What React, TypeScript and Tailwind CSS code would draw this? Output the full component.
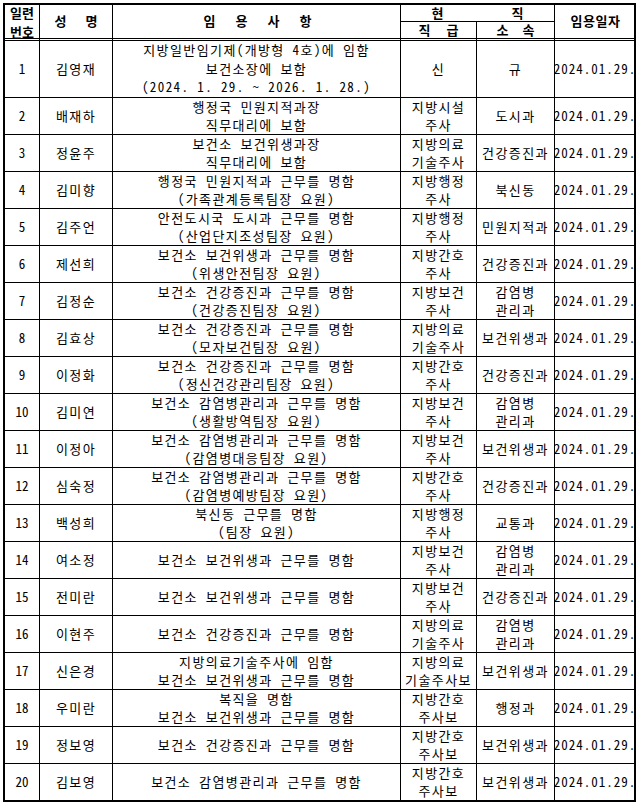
import React from "react";

type Row = {
  no: string;
  name: string;
  desc: string[];
  grade: string[];
  dept: string[];
};

const rows: Row[] = [
  { no: "1", name: "김영재", desc: ["지방일반임기제(개방형 4호)에 임함", "보건소장에 보함", "(2024. 1. 29. ~ 2026. 1. 28.)"], grade: ["신"], dept: ["규"] },
  { no: "2", name: "배재하", desc: ["행정국 민원지적과장", "직무대리에 보함"], grade: ["지방시설", "주사"], dept: ["도시과"] },
  { no: "3", name: "정윤주", desc: ["보건소 보건위생과장", "직무대리에 보함"], grade: ["지방의료", "기술주사"], dept: ["건강증진과"] },
  { no: "4", name: "김미향", desc: ["행정국 민원지적과 근무를 명함", "(가족관계등록팀장 요원)"], grade: ["지방행정", "주사"], dept: ["북신동"] },
  { no: "5", name: "김주언", desc: ["안전도시국 도시과 근무를 명함", "(산업단지조성팀장 요원)"], grade: ["지방행정", "주사"], dept: ["민원지적과"] },
  { no: "6", name: "제선희", desc: ["보건소 보건위생과 근무를 명함", "(위생안전팀장 요원)"], grade: ["지방간호", "주사"], dept: ["건강증진과"] },
  { no: "7", name: "김정순", desc: ["보건소 건강증진과 근무를 명함", "(건강증진팀장 요원)"], grade: ["지방보건", "주사"], dept: ["감염병", "관리과"] },
  { no: "8", name: "김효상", desc: ["보건소 건강증진과 근무를 명함", "(모자보건팀장 요원)"], grade: ["지방의료", "기술주사"], dept: ["보건위생과"] },
  { no: "9", name: "이정화", desc: ["보건소 건강증진과 근무를 명함", "(정신건강관리팀장 요원)"], grade: ["지방간호", "주사"], dept: ["건강증진과"] },
  { no: "10", name: "김미연", desc: ["보건소 감염병관리과 근무를 명함", "(생활방역팀장 요원)"], grade: ["지방보건", "주사"], dept: ["감염병", "관리과"] },
  { no: "11", name: "이정아", desc: ["보건소 감염병관리과 근무를 명함", "(감염병대응팀장 요원)"], grade: ["지방보건", "주사"], dept: ["보건위생과"] },
  { no: "12", name: "심숙정", desc: ["보건소 감염병관리과 근무를 명함", "(감염병예방팀장 요원)"], grade: ["지방간호", "주사"], dept: ["건강증진과"] },
  { no: "13", name: "백성희", desc: ["북신동 근무를 명함", "(팀장 요원)"], grade: ["지방행정", "주사"], dept: ["교통과"] },
  { no: "14", name: "여소정", desc: ["보건소 보건위생과 근무를 명함"], grade: ["지방보건", "주사"], dept: ["감염병", "관리과"] },
  { no: "15", name: "전미란", desc: ["보건소 보건위생과 근무를 명함"], grade: ["지방보건", "주사"], dept: ["건강증진과"] },
  { no: "16", name: "이현주", desc: ["보건소 건강증진과 근무를 명함"], grade: ["지방의료", "기술주사"], dept: ["감염병", "관리과"] },
  { no: "17", name: "신은경", desc: ["지방의료기술주사에 임함", "보건소 보건위생과 근무를 명함"], grade: ["지방의료", "기술주사보"], dept: ["보건위생과"] },
  { no: "18", name: "우미란", desc: ["복직을 명함", "보건소 보건위생과 근무를 명함"], grade: ["지방간호", "주사보"], dept: ["행정과"] },
  { no: "19", name: "정보영", desc: ["보건소 건강증진과 근무를 명함"], grade: ["지방간호", "주사보"], dept: ["보건위생과"] },
  { no: "20", name: "김보영", desc: ["보건소 감염병관리과 근무를 명함"], grade: ["지방간호", "주사보"], dept: ["보건위생과"] },
];

function Lines({ lines }: { lines: string[] }) {
  return (
    <div className="flex flex-col items-center">
      {lines.map((l, i) => (
        <span key={i} className="whitespace-pre">
          {l}
        </span>
      ))}
    </div>
  );
}

const cell = "flex items-center justify-center text-center border-black overflow-visible";

export default function App() {
  return (
    <div className="w-[640px] h-[806px] bg-white pt-[3px] pl-[3px]">
      <div
        className="w-[633px] border-2 border-black grid grid-cols-[35px_73px_288px_76px_78px_79px] grid-rows-[17px_19px_57px_repeat(18,37px)_36px] text-[13px] leading-[18.5px] tracking-[1.4px] text-black"
        style={{ fontFamily: '"Noto Sans Mono CJK KR", "Noto Sans CJK KR", sans-serif' }}
      >
        {/* header */}
        <div className={`${cell} row-span-2 border-r border-b-[3px] border-double font-bold leading-[19px]`}>
          <div className="flex flex-col items-center tracking-normal">
            <span>일련</span>
            <span>번호</span>
          </div>
        </div>
        <div className={`${cell} row-span-2 border-r border-b-[3px] border-double font-bold gap-[19px] tracking-normal`}>
          <span>성</span>
          <span>명</span>
        </div>
        <div className={`${cell} row-span-2 border-r border-b-[3px] border-double font-bold gap-[20px] pl-[2px] tracking-normal`}>
          <span>임</span>
          <span>용</span>
          <span>사</span>
          <span>항</span>
        </div>
        <div className={`${cell} col-span-2 border-r border-b font-bold gap-[68px] leading-[16px] tracking-normal`}>
          <span>현</span>
          <span>직</span>
        </div>
        <div className={`${cell} row-span-2 border-b-[3px] border-double font-bold pl-[2px] tracking-[0.5px]`}>
          <span>임용일자</span>
        </div>
        <div className={`${cell} border-r border-b-[3px] border-double font-bold gap-[16px] leading-[16px] tracking-normal`}>
          <span>직</span>
          <span>급</span>
        </div>
        <div className={`${cell} border-r border-b-[3px] border-double font-bold gap-[14px] leading-[16px] tracking-normal`}>
          <span>소</span>
          <span>속</span>
        </div>

        {/* body */}
        {rows.map((r, idx) => {
          const last = idx === rows.length - 1;
          const b = last ? "" : "border-b";
          return (
            <React.Fragment key={r.no}>
              <div className={`${cell} border-r ${b} tracking-normal`}>{r.no}</div>
              <div className={`${cell} border-r ${b}`}>{r.name}</div>
              <div className={`${cell} border-r ${b}`}>
                <Lines lines={r.desc} />
              </div>
              <div className={`${cell} border-r ${b}`}>
                <Lines lines={r.grade} />
              </div>
              <div className={`${cell} border-r ${b}`}>
                <Lines lines={r.dept} />
              </div>
              <div className={`${cell} ${b} whitespace-nowrap tracking-[1px] pl-[1px]`}>2024.01.29.</div>
            </React.Fragment>
          );
        })}
      </div>
    </div>
  );
}
